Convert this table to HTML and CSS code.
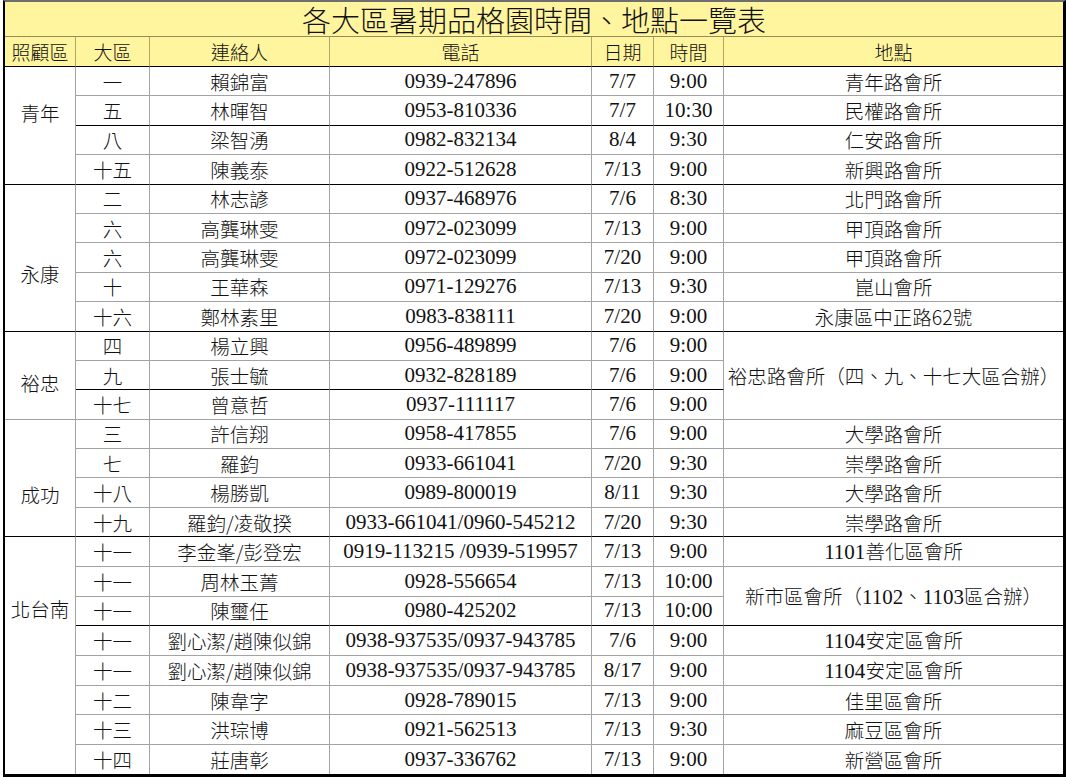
FILE: index.html
```html
<!DOCTYPE html>
<html lang="zh-Hant">
<head>
<meta charset="utf-8">
<title>各大區暑期品格園時間、地點一覽表</title>
<link rel="stylesheet" href="styles.css">
</head>
<body>
<div class="page">
<table class="sheet">
  <colgroup>
    <col class="c1"><col class="c2"><col class="c3"><col class="c4"><col class="c5"><col class="c6"><col class="c7">
  </colgroup>
  <thead>
    <tr class="title"><th colspan="7">各大區暑期品格園時間、地點一覽表</th></tr>
    <tr class="head">
      <th>照顧區</th><th>大區</th><th>連絡人</th><th>電話</th><th>日期</th><th>時間</th><th class="last">地點</th>
    </tr>
  </thead>
  <tbody>
    <tr><td rowspan="4" class="zone z1 bk">青年</td><td>一</td><td>賴錦富</td><td class="num">0939-247896</td><td class="num">7/7</td><td class="num">9:00</td><td class="last">青年路會所</td></tr>
    <tr class="bk"><td>五</td><td>林暉智</td><td class="num">0953-810336</td><td class="num">7/7</td><td class="num">10:30</td><td class="last">民權路會所</td></tr>
    <tr><td>八</td><td>梁智湧</td><td class="num">0982-832134</td><td class="num">8/4</td><td class="num">9:30</td><td class="last">仁安路會所</td></tr>
    <tr class="bk"><td>十五</td><td>陳義泰</td><td class="num">0922-512628</td><td class="num">7/13</td><td class="num">9:00</td><td class="last">新興路會所</td></tr>

    <tr><td rowspan="5" class="zone z2 bk">永康</td><td>二</td><td>林志諺</td><td class="num">0937-468976</td><td class="num">7/6</td><td class="num">8:30</td><td class="last">北門路會所</td></tr>
    <tr><td>六</td><td>高龔琳雯</td><td class="num">0972-023099</td><td class="num">7/13</td><td class="num">9:00</td><td class="last">甲頂路會所</td></tr>
    <tr><td>六</td><td>高龔琳雯</td><td class="num">0972-023099</td><td class="num">7/20</td><td class="num">9:00</td><td class="last">甲頂路會所</td></tr>
    <tr><td>十</td><td>王華森</td><td class="num">0971-129276</td><td class="num">7/13</td><td class="num">9:30</td><td class="last">崑山會所</td></tr>
    <tr class="bk"><td>十六</td><td>鄭林素里</td><td class="num">0983-838111</td><td class="num">7/20</td><td class="num">9:00</td><td class="last">永康區中正路62號</td></tr>

    <tr><td rowspan="3" class="zone z3">裕忠</td><td>四</td><td>楊立興</td><td class="num">0956-489899</td><td class="num">7/6</td><td class="num">9:00</td><td rowspan="3" class="last merged">裕忠路會所（四、九、十七大區合辦）</td></tr>
    <tr class="bk"><td>九</td><td>張士毓</td><td class="num">0932-828189</td><td class="num">7/6</td><td class="num">9:00</td></tr>
    <tr><td>十七</td><td>曾意哲</td><td class="num">0937-111117</td><td class="num">7/6</td><td class="num">9:00</td></tr>

    <tr><td rowspan="4" class="zone z4 bk">成功</td><td>三</td><td>許信翔</td><td class="num">0958-417855</td><td class="num">7/6</td><td class="num">9:00</td><td class="last">大學路會所</td></tr>
    <tr><td>七</td><td>羅鈞</td><td class="num">0933-661041</td><td class="num">7/20</td><td class="num">9:30</td><td class="last">崇學路會所</td></tr>
    <tr><td>十八</td><td>楊勝凱</td><td class="num">0989-800019</td><td class="num">8/11</td><td class="num">9:30</td><td class="last">大學路會所</td></tr>
    <tr class="bk"><td>十九</td><td>羅鈞/凌敬揆</td><td class="num">0933-661041/0960-545212</td><td class="num">7/20</td><td class="num">9:30</td><td class="last">崇學路會所</td></tr>

    <tr><td rowspan="8" class="zone z5 end">北台南</td><td>十一</td><td>李金峯/彭登宏</td><td class="num">0919-113215 /0939-519957</td><td class="num">7/13</td><td class="num">9:00</td><td class="last"><span class="n">1101</span>善化區會所</td></tr>
    <tr><td>十一</td><td>周林玉菁</td><td class="num">0928-556654</td><td class="num">7/13</td><td class="num">10:00</td><td rowspan="2" class="last merged bk">新市區會所（<span class="n">1102</span>、<span class="n">1103</span>區合辦）</td></tr>
    <tr class="bk"><td>十一</td><td>陳璽任</td><td class="num">0980-425202</td><td class="num">7/13</td><td class="num">10:00</td></tr>
    <tr><td>十一</td><td>劉心潔/趙陳似錦</td><td class="num">0938-937535/0937-943785</td><td class="num">7/6</td><td class="num">9:00</td><td class="last"><span class="n">1104</span>安定區會所</td></tr>
    <tr><td>十一</td><td>劉心潔/趙陳似錦</td><td class="num">0938-937535/0937-943785</td><td class="num">8/17</td><td class="num">9:00</td><td class="last"><span class="n">1104</span>安定區會所</td></tr>
    <tr><td>十二</td><td>陳韋字</td><td class="num">0928-789015</td><td class="num">7/13</td><td class="num">9:00</td><td class="last">佳里區會所</td></tr>
    <tr><td>十三</td><td>洪琮博</td><td class="num">0921-562513</td><td class="num">7/13</td><td class="num">9:30</td><td class="last">麻豆區會所</td></tr>
    <tr class="end"><td>十四</td><td>莊唐彰</td><td class="num">0937-336762</td><td class="num">7/13</td><td class="num">9:00</td><td class="last">新營區會所</td></tr>
  </tbody>
</table>
</div>
</body>
</html>
```

FILE: styles.css
```css
html, body {
  margin: 0;
  padding: 0;
  background: #ffffff;
}

.page {
  padding: 0 0 0 3px;
}

.sheet {
  width: 1063px;
  table-layout: fixed;
  border-collapse: separate;
  border-spacing: 0;
  border-top: 2px solid #6e6e6e;
  border-left: 2px solid #000;
  border-right: 3px solid #000;
  border-bottom: 3px solid #000;
  font-family: "Noto Sans CJK TC", "Noto Sans CJK SC", sans-serif;
  font-weight: 300;
  color: #111;
}

.c1 { width: 71px; }
.c2 { width: 74px; }
.c3 { width: 180px; }
.c4 { width: 262px; }
.c5 { width: 62px; }
.c6 { width: 70px; }
.c7 { width: 339px; }

.sheet th,
.sheet td {
  padding: 0;
  text-align: center;
  vertical-align: middle;
  white-space: nowrap;
  overflow: hidden;
  font-weight: 300;
}

.title {
  height: 35px;
}

.sheet .title th {
  background: #fff59f;
  border-bottom: 1px solid #968c55;
  font-size: 29px;
  line-height: 34px;
  overflow: visible;
}

.head {
  height: 30px;
}

.head th {
  background: #fff59f;
  border-right: 1px solid #b1a567;
  border-bottom: 1px solid #000;
  font-size: 19px;
  line-height: 28px;
}

.head th.last {
  border-right: none;
}

tbody tr {
  height: 29.4px;
}

tbody td {
  border-right: 1px solid #a3a3a3;
  border-bottom: 1px solid #a3a3a3;
  font-size: 19.5px;
  line-height: 27px;
}

tbody td.last {
  border-right: none;
}

tbody tr.bk td,
tbody td.bk {
  border-bottom-color: #000;
}

tbody tr.end td,
tbody td.end {
  border-bottom: none;
}

tbody td.num,
tbody .n {
  font-family: "Liberation Serif", "Times New Roman", serif;
  font-size: 21px;
  font-weight: 400;
}

.sheet td.zone {
  vertical-align: top;
}

.sheet td.z1 { padding-top: 32px; }
.sheet td.z2 { padding-top: 75px; }
.sheet td.z3 { padding-top: 37px; }
.sheet td.z4 { padding-top: 61px; }
.sheet td.z5 { padding-top: 58px; }
```
